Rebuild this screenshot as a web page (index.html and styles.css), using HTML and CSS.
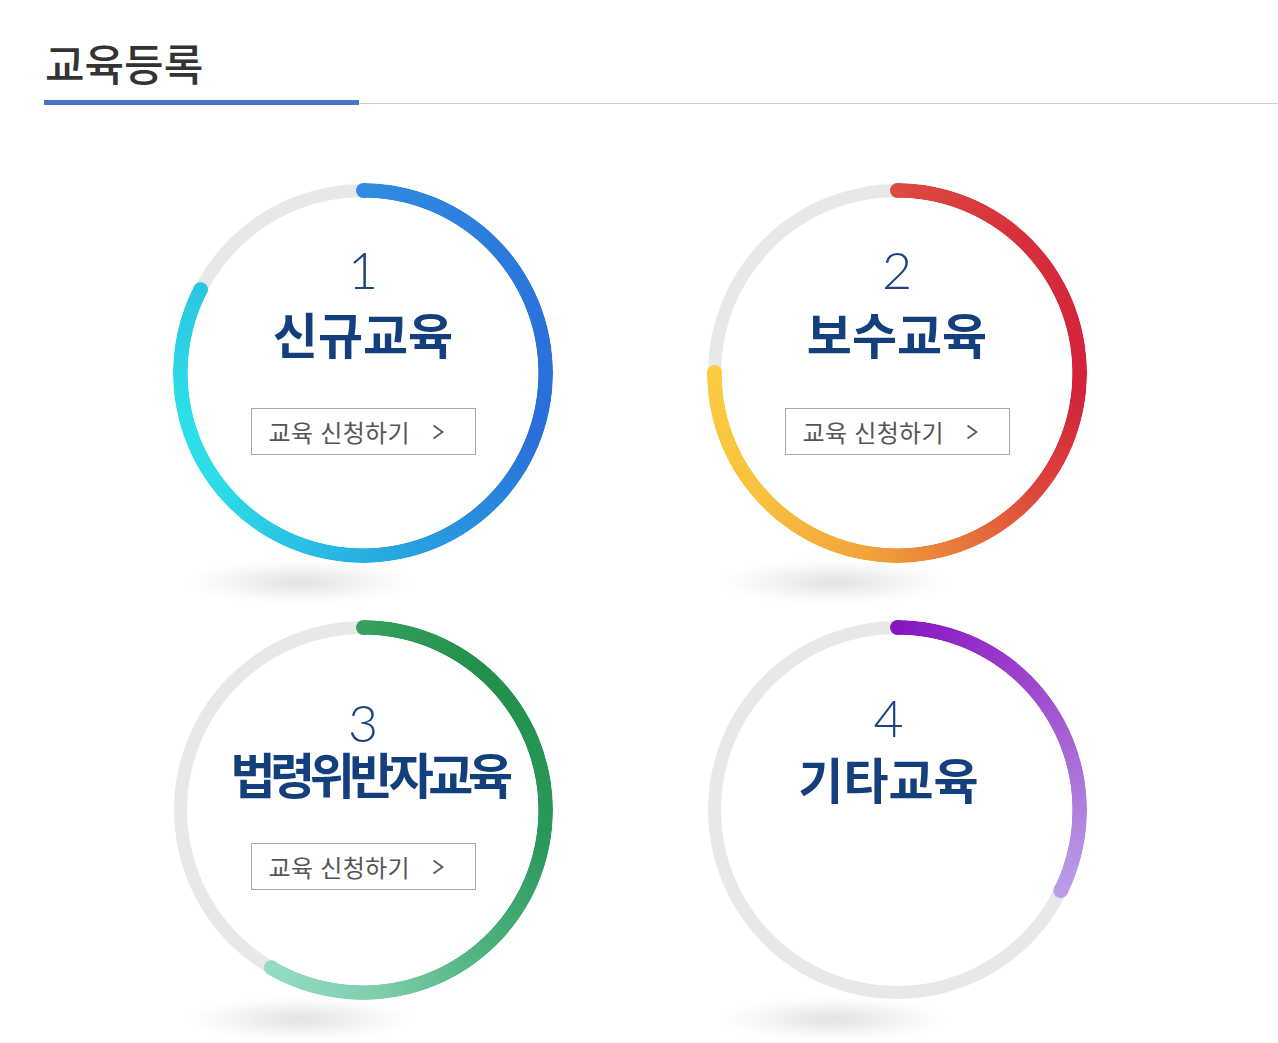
FILE: index.html
```html
<!DOCTYPE html>
<html lang="ko">
<head>
<meta charset="utf-8">
<title>교육등록</title>
<link rel="stylesheet" href="styles.css">
</head>
<body>
<div class="heading">
  <h1 class="heading-title">교육등록</h1>
</div>
<div class="grid">
  <div class="card c1">
    <div class="shadow"></div>
    <div class="track"></div>
    <div class="arc"></div>
    <div class="cap cap-start"></div>
    <div class="cap cap-end"></div>
    <div class="body">
      <div class="num">1</div>
      <div class="title">신규교육</div>
      <a class="btn" href="#"><span>교육 신청하기</span><svg class="chev" width="12" height="16" viewBox="0 0 12 16"><polyline points="1.5,1.5 10.5,8 1.5,14.5" fill="none" stroke="#5a5a5a" stroke-width="1.8"/></svg></a>
    </div>
  </div>
  <div class="card c2">
    <div class="shadow"></div>
    <div class="track"></div>
    <div class="arc"></div>
    <div class="cap cap-start"></div>
    <div class="cap cap-end"></div>
    <div class="body">
      <div class="num">2</div>
      <div class="title">보수교육</div>
      <a class="btn" href="#"><span>교육 신청하기</span><svg class="chev" width="12" height="16" viewBox="0 0 12 16"><polyline points="1.5,1.5 10.5,8 1.5,14.5" fill="none" stroke="#5a5a5a" stroke-width="1.8"/></svg></a>
    </div>
  </div>
  <div class="card c3">
    <div class="shadow"></div>
    <div class="track"></div>
    <div class="arc"></div>
    <div class="cap cap-start"></div>
    <div class="cap cap-end"></div>
    <div class="body">
      <div class="num">3</div>
      <div class="title">법령위반자교육</div>
      <a class="btn" href="#"><span>교육 신청하기</span><svg class="chev" width="12" height="16" viewBox="0 0 12 16"><polyline points="1.5,1.5 10.5,8 1.5,14.5" fill="none" stroke="#5a5a5a" stroke-width="1.8"/></svg></a>
    </div>
  </div>
  <div class="card c4">
    <div class="shadow"></div>
    <div class="track"></div>
    <div class="arc"></div>
    <div class="cap cap-start"></div>
    <div class="cap cap-end"></div>
    <div class="body">
      <div class="num">4</div>
      <div class="title">기타교육</div>
    </div>
  </div>
</div>
</body>
</html>
```
FILE: styles.css
```css
html, body {
  margin: 0;
  padding: 0;
  background: #ffffff;
}
body {
  font-family: "Noto Sans CJK KR", "Noto Sans", sans-serif;
  width: 1278px;
  height: 1043px;
  overflow: hidden;
}

.heading {
  margin-left: 44px;
  padding-top: 41px;
  border-bottom: 1px solid #cfcfcf;
}
.heading-title {
  margin: 0 0 -2px 0;
  width: 315px;
  font-size: 43px;
  line-height: 43px;
  font-weight: 500;
  color: #333333;
  padding-bottom: 16px;
  border-bottom: 5px solid #4773c9;
  text-indent: 1px;
}

.grid {
  display: grid;
  grid-template-columns: 380px 380px;
  column-gap: 154px;
  row-gap: 57px;
  padding-left: 173px;
  margin-top: 79px;
}

.card {
  position: relative;
  width: 380px;
  height: 380px;
}

.shadow {
  position: absolute;
  left: 14px;
  top: 378px;
  width: 226px;
  height: 42px;
  border-radius: 50%;
  background: radial-gradient(closest-side, rgba(0,0,0,0.12), rgba(0,0,0,0.045) 60%, rgba(0,0,0,0));
  filter: blur(3px);
}

.track {
  position: absolute;
  inset: 1px;
  border: 13px solid #e8e8e8;
  border-radius: 50%;
  box-sizing: border-box;
  background: #ffffff;
}

.arc {
  position: absolute;
  inset: 0;
  border-radius: 50%;
  -webkit-mask: radial-gradient(circle closest-side, transparent calc(100% - 15px), #000 calc(100% - 14.3px));
  mask: radial-gradient(circle closest-side, transparent calc(100% - 15px), #000 calc(100% - 14.3px));
}

.cap {
  position: absolute;
  inset: 0;
}
.cap::before {
  content: "";
  position: absolute;
  left: 182.5px;
  top: 0;
  width: 15px;
  height: 15px;
  border-radius: 50%;
  background: var(--cap);
}

/* card 1 */
.c1 .arc {
  background: conic-gradient(from 0deg, #2f8ce0 0deg, #2a73da 70deg, #2a6fd9 110deg, #27a6e0 170deg, #2cdbe6 230deg, #2de0e8 255deg, #2cc6e2 297deg, transparent 297deg);
}
.c1 .cap-start { --cap: #2f8ce0; }
.c1 .cap-end { --cap: #2cc6e2; transform: rotate(297deg); }

/* card 2 */
.c2 .arc {
  background: conic-gradient(from 0deg, #dc4b3f 0deg, #d62e3c 45deg, #d2223b 95deg, #dc463b 130deg, #e8783a 160deg, #f2a43c 190deg, #f9c240 230deg, #fbcb42 270deg, transparent 270deg);
}
.c2 .cap-start { --cap: #dc4b3f; }
.c2 .cap-end { --cap: #fbcb42; transform: rotate(270deg); }

/* card 3 */
.c3 .arc {
  background: conic-gradient(from 0deg, #36a05c 0deg, #22904a 40deg, #2a985a 100deg, #4fb27e 140deg, #7ccfab 175deg, #93dcc3 210deg, transparent 210deg);
}
.c3 .cap-start { --cap: #36a05c; }
.c3 .cap-end { --cap: #93dcc3; transform: rotate(210deg); }

/* card 4 */
.c4 .arc {
  background: conic-gradient(from 0deg, #8616c2 0deg, #9a38ca 35deg, #a865d6 70deg, #b38ee2 100deg, #b99ce8 116deg, transparent 116deg);
}
.c4 .cap-start { --cap: #8616c2; }
.c4 .cap-end { --cap: #b99ce8; transform: rotate(116deg); }

.body {
  position: relative;
  display: flex;
  flex-direction: column;
  align-items: center;
}

.num {
  font-family: "Lato", "Open Sans", sans-serif;
  font-weight: 300;
  font-size: 52px;
  line-height: 52px;
  color: #1d4480;
}
.title {
  font-size: 49px;
  line-height: 49px;
  font-weight: 700;
  color: #143f7d;
  white-space: nowrap;
}

.btn {
  display: flex;
  align-items: center;
  box-sizing: border-box;
  width: 225px;
  height: 47px;
  padding-left: 17px;
  border: 1px solid #a8a8a8;
  background: #ffffff;
  color: #555555;
  font-size: 24px;
  text-decoration: none;
  letter-spacing: 0.3px;
}
.btn .chev {
  margin-left: 22px;
}

.c1 .num, .c2 .num { margin-top: 60px; }
.c1 .title, .c2 .title { margin-top: 13px; }
.c1 .btn, .c2 .btn { margin-top: 51px; }

.c3 .num { margin-top: 80px; line-height: 44px; }
.c3 .title { margin-top: 4px; letter-spacing: -5.5px; padding-left: 12px; }
.c3 .btn { margin-top: 46px; }

.c4 .body { padding-right: 17px; }
.c4 .num { margin-top: 71px; }
.c4 .title { margin-top: 10px; }
```
